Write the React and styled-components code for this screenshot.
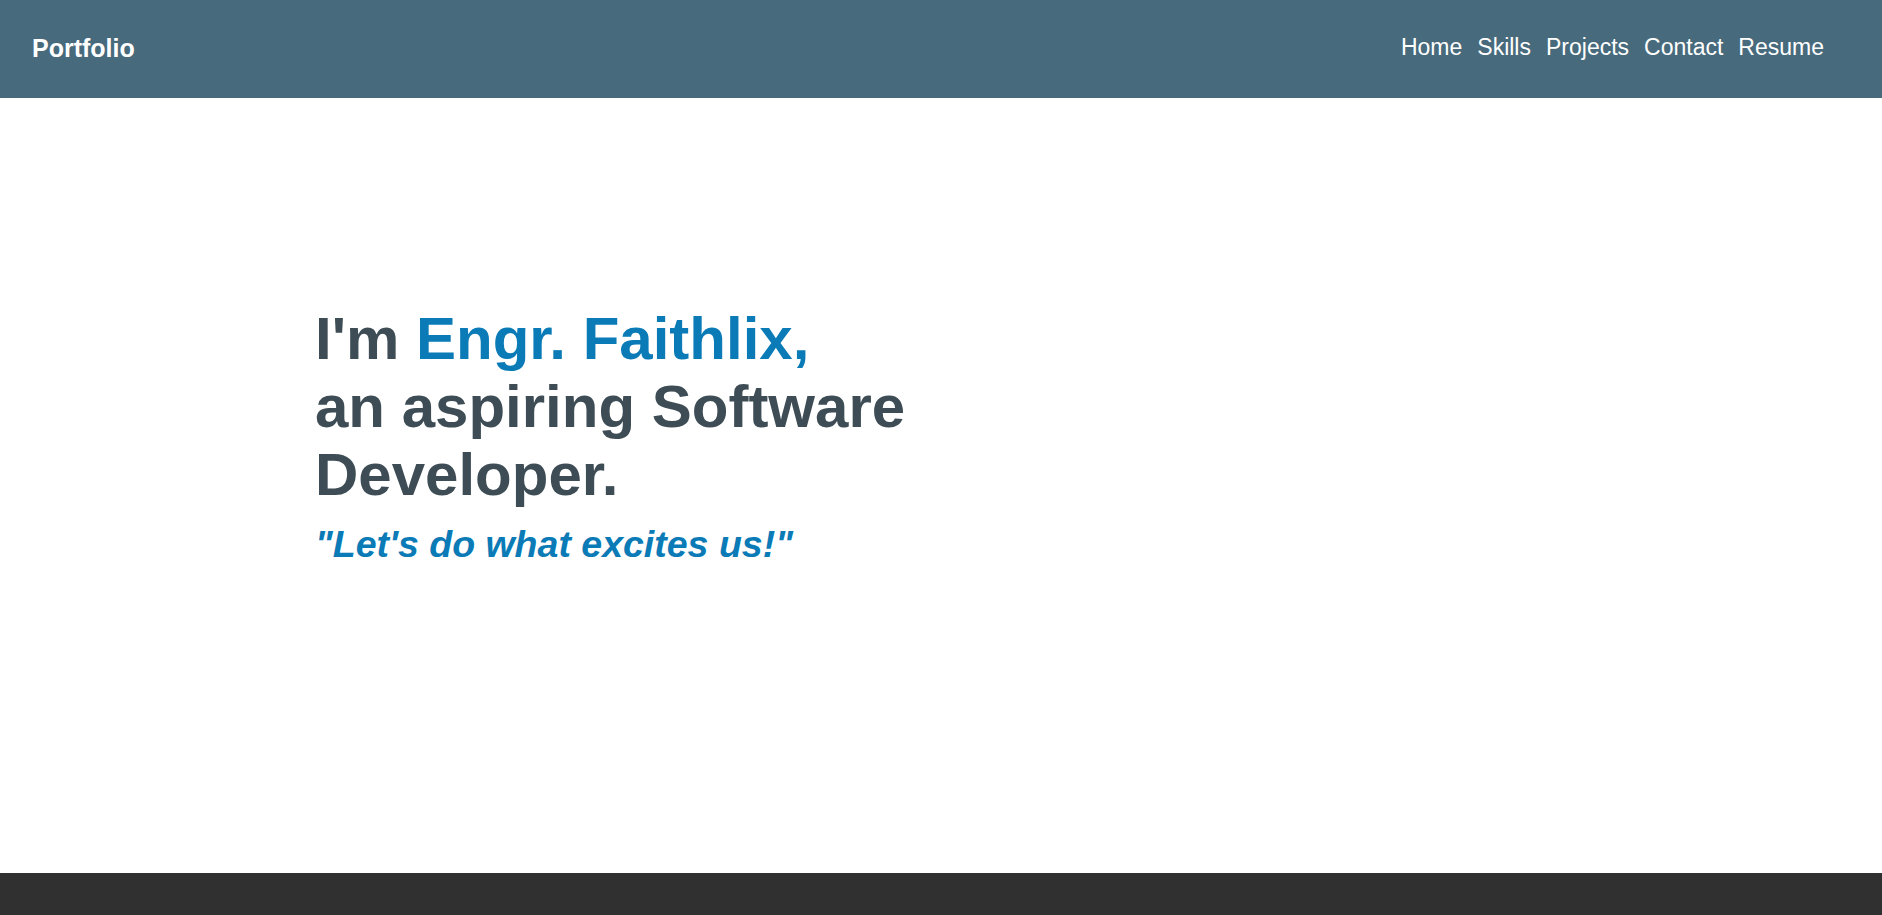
import styled, { createGlobalStyle } from "styled-components";

const GlobalStyle = createGlobalStyle`
  * {
    box-sizing: border-box;
  }

  body {
    margin: 0;
    background-color: #ffffff;
    font-family: "Liberation Sans", Arial, sans-serif;
  }
`;

const links = ["Home", "Skills", "Projects", "Contact", "Resume"];

export default function App() {
  return (
    <Page>
      <GlobalStyle />
      <NavBar>
        <Brand>Portfolio</Brand>
        <NavLinks>
          {links.map((link) => (
            <NavLink key={link} href={"#" + link.toLowerCase()}>
              {link}
            </NavLink>
          ))}
        </NavLinks>
      </NavBar>

      <Hero>
        <Intro>
          <Heading>
            I'm <Highlight>Engr. Faithlix,</Highlight>
            <br />
            an aspiring Software
            <br />
            Developer.
          </Heading>
          <Quote>"Let's do what excites us!"</Quote>
        </Intro>
      </Hero>

      <Footer />
    </Page>
  );
}

const Page = styled.div`
  min-height: 100vh;
  display: flex;
  flex-direction: column;
`;

const NavBar = styled.nav`
  height: 98px;
  background-color: #476a7c;
  display: flex;
  flex-direction: row;
  align-items: center;
  justify-content: space-between;
  padding: 0 58px 2px 32px;
`;

const Brand = styled.h1`
  margin: 0;
  font-family: "Liberation Sans", Arial, sans-serif;
  font-size: 25px;
  font-weight: 700;
  color: #ffffff;
`;

const NavLinks = styled.div`
  display: flex;
  flex-direction: row;
  align-items: center;
  gap: 15px;
  margin-bottom: 2px;
`;

const NavLink = styled.a`
  font-family: "Liberation Sans", Arial, sans-serif;
  font-size: 23px;
  color: #ffffff;
  text-decoration: none;
  cursor: pointer;
`;

const Hero = styled.main`
  flex: 1;
  min-height: 775px;
  display: flex;
  flex-direction: row;
  align-items: flex-start;
  padding: 207px 0 0 315px;
`;

const Intro = styled.section`
  display: flex;
  flex-direction: column;
  gap: 14px;
`;

const Heading = styled.h2`
  margin: 0;
  font-family: "Liberation Sans Narrow", "Arial Narrow", "Liberation Sans", sans-serif;
  font-size: 60px;
  font-weight: 700;
  line-height: 68px;
  color: #3e4d55;
`;

const Highlight = styled.span`
  color: #0a7bb6;
`;

const Quote = styled.p`
  margin: 0;
  font-family: "Liberation Sans Narrow", "Arial Narrow", "Liberation Sans", sans-serif;
  font-size: 37.5px;
  font-weight: 700;
  font-style: italic;
  color: #0a7bb6;
`;

const Footer = styled.footer`
  height: 42px;
  background-color: #303030;
`;
